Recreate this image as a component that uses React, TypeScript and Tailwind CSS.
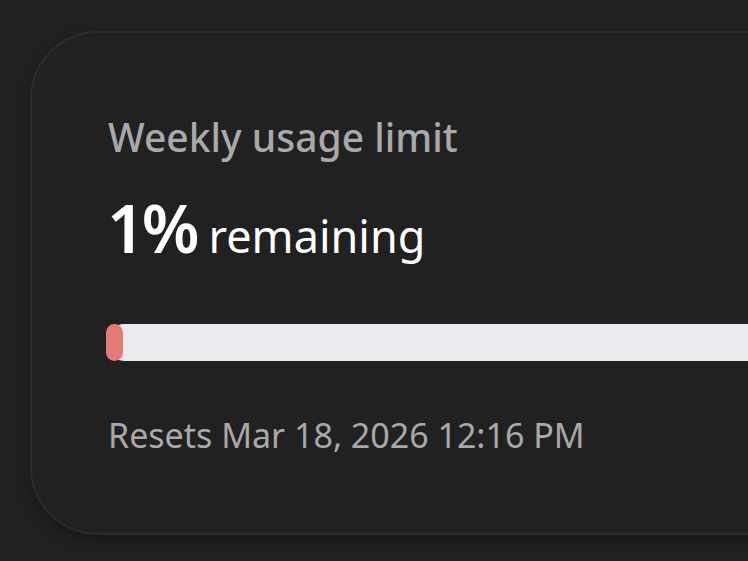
export default function App() {
  const remaining = 1;

  return (
    <div
      className="h-[561px] w-[748px] overflow-hidden bg-[#212121] pl-[30px] pt-[31px]"
      style={{ fontFamily: '"Noto Sans", "Open Sans", sans-serif' }}
    >
      <div className="w-[820px] rounded-[68px] border-2 border-[#2c2c2c] bg-[#212121] pb-[78px] pl-[76px] pt-[81px] shadow-[0_6px_14px_rgba(0,0,0,0.25)]">
        <div className="text-[39px] font-medium leading-[46px] text-[#a9a9a9]">
          Weekly usage limit
        </div>

        <div className="mt-[27px] flex items-baseline gap-[12px] leading-[80px] text-white">
          <span className="-ml-[1px] text-[66px] font-semibold tracking-[-3px]">{remaining}%</span>
          <span className="text-[45px]">remaining</span>
        </div>

        <div className="-ml-[2px] mt-[48px] h-[37px] rounded-l-full bg-[#eaeaef]">
          <div className="h-full rounded-full bg-[#e27b76]" style={{ width: 17 }} />
        </div>

        <div className="mt-[54px] text-[34px] leading-[40px] text-[#a9a9a9]">
          Resets Mar 18, 2026 12:16 PM
        </div>
      </div>
    </div>
  );
}
